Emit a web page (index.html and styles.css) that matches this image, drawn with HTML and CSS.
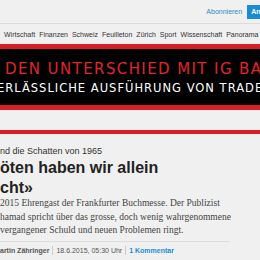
FILE: index.html
```html
<!DOCTYPE html>
<html>
<head>
  <title>NZZ Feuilleton</title>
  <link rel="stylesheet" href="styles.css">
</head>
<body>
  <div class="topbar">
    <a href="#" class="subscribe">Abonnieren</a>
    <button class="login">Anmelden</button>
  </div>

  <nav class="nav">
    <a href="#">Wirtschaft</a>
    <a href="#">Finanzen</a>
    <a href="#">Schweiz</a>
    <a href="#">Feuilleton</a>
    <a href="#">Zürich</a>
    <a href="#">Sport</a>
    <a href="#">Wissenschaft</a>
    <a href="#">Panorama</a>
  </nav>

  <div class="ad">
    <div class="ad-title">DEN UNTERSCHIED MIT IG BANK</div>
    <div class="ad-sub">ERLÄSSLICHE AUSFÜHRUNG VON TRADES</div>
  </div>

  <div class="spacer"></div>

  <div class="article">
    <div class="kicker">nd die Schatten von 1965</div>
    <h1 class="headline">öten haben wir allein<br>cht»</h1>
    <p class="lead">2015 Ehrengast der Frankfurter Buchmesse. Der Publizist<br>hamad spricht über das grosse, doch wenig wahrgenommene<br>vergangener Schuld und neuen Problemen ringt.</p>
    <div class="byline">
      <span class="author">artin Zähringer</span>
      <span class="date">18.6.2015, 05:30 Uhr</span>
      <a href="#" class="comments">1 Kommentar</a>
    </div>
  </div>
</body>
</html>
```

FILE: styles.css
```css
body {
  margin: 0;
  width: 260px;
  height: 260px;
  overflow: hidden;
  background: #f0f0f0;
  font-family: "Liberation Sans", Arial, sans-serif;
  color: #333;
}
a { text-decoration: none; }

.topbar {
  height: 23px;
  border-bottom: 1px solid #dcdcdc;
  display: flex;
  justify-content: flex-end;
  align-items: center;
  gap: 5px;
  overflow: hidden;
}
.subscribe {
  font-size: 7px;
  color: #2a8ccc;
}
.login {
  flex: none;
  margin-right: -29px;
  height: 14px;
  padding: 0 4px;
  border: none;
  background: #1b8cd4;
  color: #fff;
  font-family: inherit;
  font-size: 7px;
  font-weight: bold;
  text-align: left;
}

.nav {
  height: 20px;
  display: flex;
  align-items: center;
  gap: 4px;
  padding-left: 4px;
  white-space: nowrap;
  overflow: hidden;
}
.nav a {
  font-size: 7px;
  color: #333;
}

.ad {
  height: 56px;
  background: #000;
  border-top: 5px solid #d71f27;
  border-bottom: 5px solid #d71f27;
  white-space: nowrap;
  overflow: hidden;
  display: flex;
  flex-direction: column;
  justify-content: center;
  gap: 3px;
  font-family: "DejaVu Sans", sans-serif;
}
.ad-title {
  color: #e0252c;
  font-size: 15px;
  letter-spacing: 1.4px;
  padding-left: 5px;
}
.ad-sub {
  color: #fff;
  font-size: 11.5px;
  letter-spacing: 1px;
  margin-left: -3px;
}

.spacer {
  height: 20px;
  border-bottom: 4px solid #d71f27;
}

.article {
  width: 230px;
  white-space: nowrap;
}
.kicker {
  font-size: 9px;
  color: #333;
  margin-top: 12px;
}
.headline {
  font-size: 16px;
  line-height: 20px;
  font-weight: bold;
  color: #222;
  margin: 2px 0 -1px;
}
.lead {
  font-family: "Liberation Serif", "Times New Roman", serif;
  font-size: 9.5px;
  line-height: 13.5px;
  color: #444;
  margin: 0;
  padding-bottom: 3px;
  border-bottom: 1px solid #dddddd;
}
.byline {
  display: flex;
  align-items: center;
  height: 18px;
  font-size: 7px;
  color: #555;
}
.byline span, .byline a {
  padding: 0 3px;
  border-left: 1px solid #ccc;
  line-height: 9px;
}
.byline .author {
  padding-left: 0;
  border-left: none;
  font-weight: bold;
}
.comments {
  color: #1b8cd4;
  font-weight: bold;
}
```
